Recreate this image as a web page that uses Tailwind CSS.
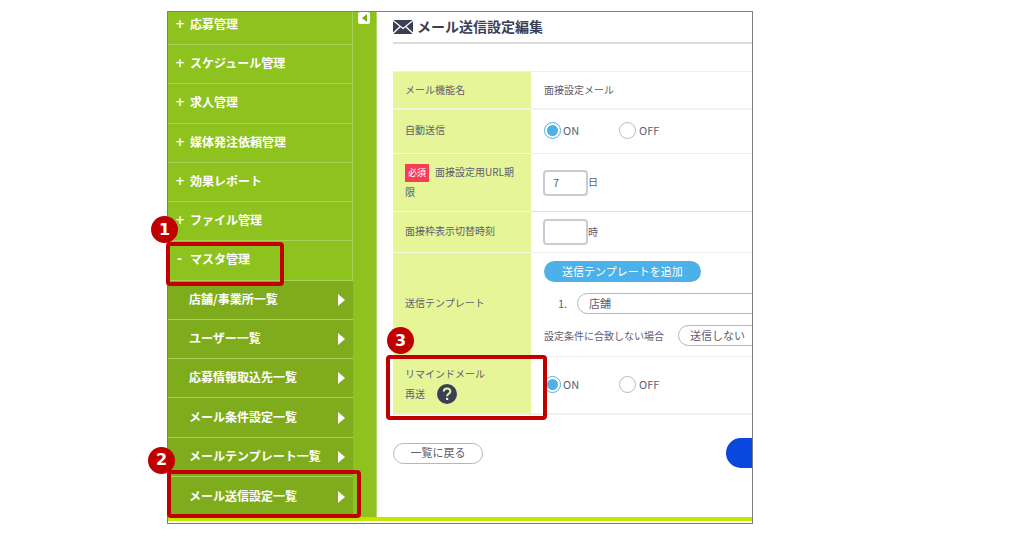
<!DOCTYPE html>
<html lang="ja">
  <head>
    <meta charset="UTF-8" />
    <meta name="viewport" content="width=device-width, initial-scale=1.0" />
    <title>メール送信設定編集</title>
    <script src="https://cdn.jsdelivr.net/npm/@tailwindcss/browser@4"></script>
  </head>
  <body class="bg-white font-['Noto_Sans_CJK_JP',sans-serif] text-[#5d6070]">
    <div class="grid grid-cols-[167fr_586fr_259fr] pt-[11px]">
      <div class="col-start-2 min-w-0 border border-[#7f7f7f]">
        <div class="flex">
          <!-- side menu -->
          <nav class="flex w-[209px] shrink-0 border-r border-[#b5d86a] bg-[#8dc21f]">
            <ul class="flex w-[185px] flex-col text-xs font-bold text-white">
              <li class="flex h-[33px] items-center border-r border-b border-[#a9d155] pb-2">
                <a href="#" class="flex pl-[7px]"><span class="w-[15px] font-['DejaVu_Sans',sans-serif]">+</span>応募管理</a>
              </li>
              <li class="flex flex-1 items-center border-r border-b border-[#a9d155]">
                <a href="#" class="flex pb-[2px] pl-[7px]"><span class="w-[15px] font-['DejaVu_Sans',sans-serif]">+</span>スケジュール管理</a>
              </li>
              <li class="flex flex-1 items-center border-r border-b border-[#a9d155]">
                <a href="#" class="flex pb-[2px] pl-[7px]"><span class="w-[15px] font-['DejaVu_Sans',sans-serif]">+</span>求人管理</a>
              </li>
              <li class="flex flex-1 items-center border-r border-b border-[#a9d155]">
                <a href="#" class="flex pb-[2px] pl-[7px]"><span class="w-[15px] font-['DejaVu_Sans',sans-serif]">+</span>媒体発注依頼管理</a>
              </li>
              <li class="flex flex-1 items-center border-r border-b border-[#a9d155]">
                <a href="#" class="flex pb-[2px] pl-[7px]"><span class="w-[15px] font-['DejaVu_Sans',sans-serif]">+</span>効果レポート</a>
              </li>
              <li class="flex flex-1 items-center border-r border-b border-[#a9d155]">
                <a href="#" class="flex pb-[2px] pl-[7px]"><span class="w-[15px] font-['DejaVu_Sans',sans-serif]">+</span>ファイル管理</a>
              </li>
              <li class="relative flex flex-1 items-center border-r border-b border-[#a9d155]">
                <a href="#" class="flex pb-[2px] pl-[7px]"><span class="w-[15px] pl-[2px] font-['DejaVu_Sans',sans-serif]">-</span>マスタ管理</a>
                <span class="absolute top-px -left-[2px] z-10 h-[44px] w-[118px] rounded border-4 border-[#c00000]"></span>
                <span class="absolute -top-[25px] -left-[17px] z-10 flex size-[27px] items-center justify-center rounded-full bg-[#c00000] font-['DejaVu_Sans',sans-serif] text-base">1</span>
              </li>
              <li class="flex flex-1 items-center justify-between border-b border-[#a9d155] bg-[#7fac1c] pr-2 pl-[21px]">
                <a href="#" class="pb-[2px]">店舗/事業所一覧</a>
                <svg class="h-3 w-[7px]" viewBox="0 0 7 12" fill="#fff"><path d="M0 0 7 6 0 12z" /></svg>
              </li>
              <li class="flex flex-1 items-center justify-between border-b border-[#a9d155] bg-[#7fac1c] pr-2 pl-[21px]">
                <a href="#" class="pb-[2px]">ユーザー一覧</a>
                <svg class="h-3 w-[7px]" viewBox="0 0 7 12" fill="#fff"><path d="M0 0 7 6 0 12z" /></svg>
              </li>
              <li class="flex flex-1 items-center justify-between border-b border-[#a9d155] bg-[#7fac1c] pr-2 pl-[21px]">
                <a href="#" class="pb-[2px]">応募情報取込先一覧</a>
                <svg class="h-3 w-[7px]" viewBox="0 0 7 12" fill="#fff"><path d="M0 0 7 6 0 12z" /></svg>
              </li>
              <li class="flex flex-1 items-center justify-between border-b border-[#a9d155] bg-[#7fac1c] pr-2 pl-[21px]">
                <a href="#" class="pb-[2px]">メール条件設定一覧</a>
                <svg class="h-3 w-[7px]" viewBox="0 0 7 12" fill="#fff"><path d="M0 0 7 6 0 12z" /></svg>
              </li>
              <li class="flex flex-1 items-center justify-between border-b border-[#a9d155] bg-[#7fac1c] pr-2 pl-[21px]">
                <a href="#" class="pb-[2px]">メールテンプレート一覧</a>
                <svg class="h-3 w-[7px]" viewBox="0 0 7 12" fill="#fff"><path d="M0 0 7 6 0 12z" /></svg>
              </li>
              <li class="relative flex h-10 items-center justify-between bg-[#7fac1c] pr-2 pl-[21px]">
                <a href="#" class="pb-[2px]">メール送信設定一覧</a>
                <svg class="h-3 w-[7px]" viewBox="0 0 7 12" fill="#fff"><path d="M0 0 7 6 0 12z" /></svg>
                <span class="absolute -top-[7px] -left-px z-10 h-[48px] w-[194px] rounded border-4 border-[#c00000]"></span>
                <span class="absolute -top-[30px] -left-[20px] z-10 flex size-[27px] items-center justify-center rounded-full bg-[#c00000] font-['DejaVu_Sans',sans-serif] text-base">2</span>
              </li>
            </ul>
            <button type="button" aria-label="メニューを閉じる" class="ml-[5px] flex size-3 items-center justify-center rounded-xs bg-white">
              <svg class="h-2 w-[5px]" viewBox="0 0 5 8" fill="#7fac1c"><path d="M5 0v8L0 4z" /></svg>
            </button>
          </nav>

          <!-- settings form -->
          <main class="min-w-0 flex-1 overflow-hidden pb-[49px] pl-4">
            <h1 class="flex h-[32px] items-center gap-1 border-b-2 border-[#dcdcdc] text-sm font-bold text-[#3b3f55]">
              <svg class="h-[14px] w-5" viewBox="0 0 20 14">
                <rect width="20" height="14" rx="1" fill="#3b3f55" />
                <path d="M0 0.500 10 8.500 20 0.500M0 13.500 7.300 6.500M20 13.500 12.700 6.500" fill="none" stroke="#fff" stroke-width="1.300" />
              </svg>
              <span class="pb-[2px]">メール送信設定編集</span>
            </h1>

            <form>
              <table class="mt-[27px] w-full table-fixed border-separate border-spacing-0 border-t border-[#f1f1f1] text-[10px]">
                <tr class="h-[38px]">
                  <th class="w-[138px] border-b-2 border-[#f1f3e4] bg-[#e6f598] pb-[2px] pl-3 text-left font-normal">メール機能名</th>
                  <td class="border-b-2 border-[#f1f1f1] pb-[2px] pl-[13px]">面接設定メール</td>
                </tr>
                <tr class="h-[44px]">
                  <th class="border-b border-[#f6fadd] bg-[#e6f598] pb-1 pl-3 text-left font-normal">自動送信</th>
                  <td class="border-b border-[#ececec] pb-[2px] pl-[13px]">
                    <div class="flex text-[11px]">
                      <label class="flex w-[75px] items-center gap-[2px]">
                        <input type="radio" name="auto" checked class="size-[17px] appearance-none rounded-full border border-[#b9bac2] bg-clip-content p-[2px] checked:border-[#4bb1e8] checked:bg-[#4bb1e8]" />ON
                      </label>
                      <label class="flex items-center gap-[3px]">
                        <input type="radio" name="auto" class="size-[17px] appearance-none rounded-full border border-[#b9bac2] bg-clip-content p-[2px] checked:border-[#4bb1e8] checked:bg-[#4bb1e8]" />OFF
                      </label>
                    </div>
                  </td>
                </tr>
                <tr class="h-[58px]">
                  <th class="border-b border-[#f6fadd] bg-[#e6f598] pr-3 pb-[2px] pl-3 text-left leading-5 font-normal">
                    <span class="mr-[6px] inline-block bg-[#f73e56] px-[3px] text-[9px] leading-[18px] text-white">必須</span><label for="limit">面接設定用URL期限</label>
                  </th>
                  <td class="border-b border-[#dedede] pl-3">
                    <div class="flex items-center">
                      <input id="limit" type="text" value="7" class="h-[26px] w-[45px] rounded border-2 border-[#cbcbd2] px-2 pb-[2px] text-[11px]" /><span class="pb-[2px]">日</span>
                    </div>
                  </td>
                </tr>
                <tr class="h-[41px]">
                  <th class="border-b border-[#f6fadd] bg-[#e6f598] pb-1 pl-3 text-left font-normal"><label for="hour">面接枠表示切替時刻</label></th>
                  <td class="border-b border-[#ececec] pl-3">
                    <div class="flex items-center">
                      <input id="hour" type="text" class="h-[26px] w-[45px] rounded border-2 border-[#cbcbd2] px-2 pb-[2px] text-[11px]" /><span class="pb-[2px]">時</span>
                    </div>
                  </td>
                </tr>
                <tr class="h-[104px]">
                  <th class="border-b border-[#f6fadd] bg-[#e6f598] pb-1 pl-3 text-left font-normal">送信テンプレート</th>
                  <td class="border-b border-[#ececec] pb-[2px] pl-[13px]">
                    <div class="flex flex-col items-start gap-[11px]">
                      <button type="button" class="h-[21px] rounded-full bg-[#4bb1e8] px-[18px] pb-px text-[11px] text-white">送信テンプレートを追加</button>
                      <div class="flex w-full items-center pl-[14px]">
                        <label for="template" class="w-[19px] text-[11px]">1.</label>
                        <div class="min-w-0 flex-1">
                          <select id="template" class="h-[21px] w-[240px] appearance-none rounded-full border border-[#b5b5bd] px-[11px] pb-[2px] text-[11px] leading-4">
                            <option>店舗</option>
                          </select>
                        </div>
                      </div>
                      <div class="flex items-center gap-[14px]">
                        <label for="unmatched" class="whitespace-nowrap">設定条件に合致しない場合</label>
                        <div class="w-[60px]">
                          <select id="unmatched" class="h-[21px] w-[120px] appearance-none rounded-full border border-[#b5b5bd] px-[11px] pb-[2px] text-[11px] leading-4">
                            <option>送信しない</option>
                          </select>
                        </div>
                      </div>
                    </div>
                  </td>
                </tr>
                <tr class="h-[58px]">
                  <th class="relative border-b-2 border-[#ececec] bg-[#e6f598] pb-[2px] pl-3 text-left leading-5 font-normal">
                    リマインドメール
                    <div class="flex items-center gap-3">
                      再送
                      <button type="button" aria-label="ヘルプ" class="size-5">
                        <svg viewBox="0 0 20 20">
                          <circle cx="10" cy="10" r="10" fill="#3b3f55" />
                          <path d="M6.800 7.600C6.800 5.500 8.200 4.500 10 4.500s3.300 1.100 3.300 2.900c0 2.400-3.200 2.400-3.200 4.900" fill="none" stroke="#e6f598" stroke-width="2" />
                          <rect x="9" y="13.800" width="2.200" height="2.200" fill="#e6f598" />
                        </svg>
                      </button>
                    </div>
                    <span class="absolute -top-[2px] -left-[7px] z-10 h-[65px] w-[161px] rounded border-4 border-[#c00000]"></span>
                    <span class="absolute -top-[30px] -left-[6px] z-10 flex size-[27px] items-center justify-center rounded-full bg-[#c00000] font-['DejaVu_Sans',sans-serif] text-base font-bold text-white">3</span>
                  </th>
                  <td class="border-b-2 border-[#f1f1f1] pb-[2px] pl-[13px]">
                    <div class="flex text-[11px]">
                      <label class="flex w-[75px] items-center gap-[2px]">
                        <input type="radio" name="remind" checked class="size-[17px] appearance-none rounded-full border border-[#b9bac2] bg-clip-content p-[2px] checked:border-[#4bb1e8] checked:bg-[#4bb1e8]" />ON
                      </label>
                      <label class="flex items-center gap-[3px]">
                        <input type="radio" name="remind" class="size-[17px] appearance-none rounded-full border border-[#b9bac2] bg-clip-content p-[2px] checked:border-[#4bb1e8] checked:bg-[#4bb1e8]" />OFF
                      </label>
                    </div>
                  </td>
                </tr>
              </table>

              <div class="mt-[23px] flex items-center gap-[243px]">
                <button type="button" class="h-[21px] w-[90px] shrink-0 rounded-full border border-[#b5b5bd] pb-[2px] text-[11px] leading-4">一覧に戻る</button>
                <button type="submit" aria-label="保存" class="h-[30px] w-40 shrink-0 rounded-full bg-[#0a47dc]"></button>
              </div>
            </form>
          </main>
        </div>
        <div class="mb-[2px] h-1 bg-[#c3e600]"></div>
      </div>
    </div>
  </body>
</html>
